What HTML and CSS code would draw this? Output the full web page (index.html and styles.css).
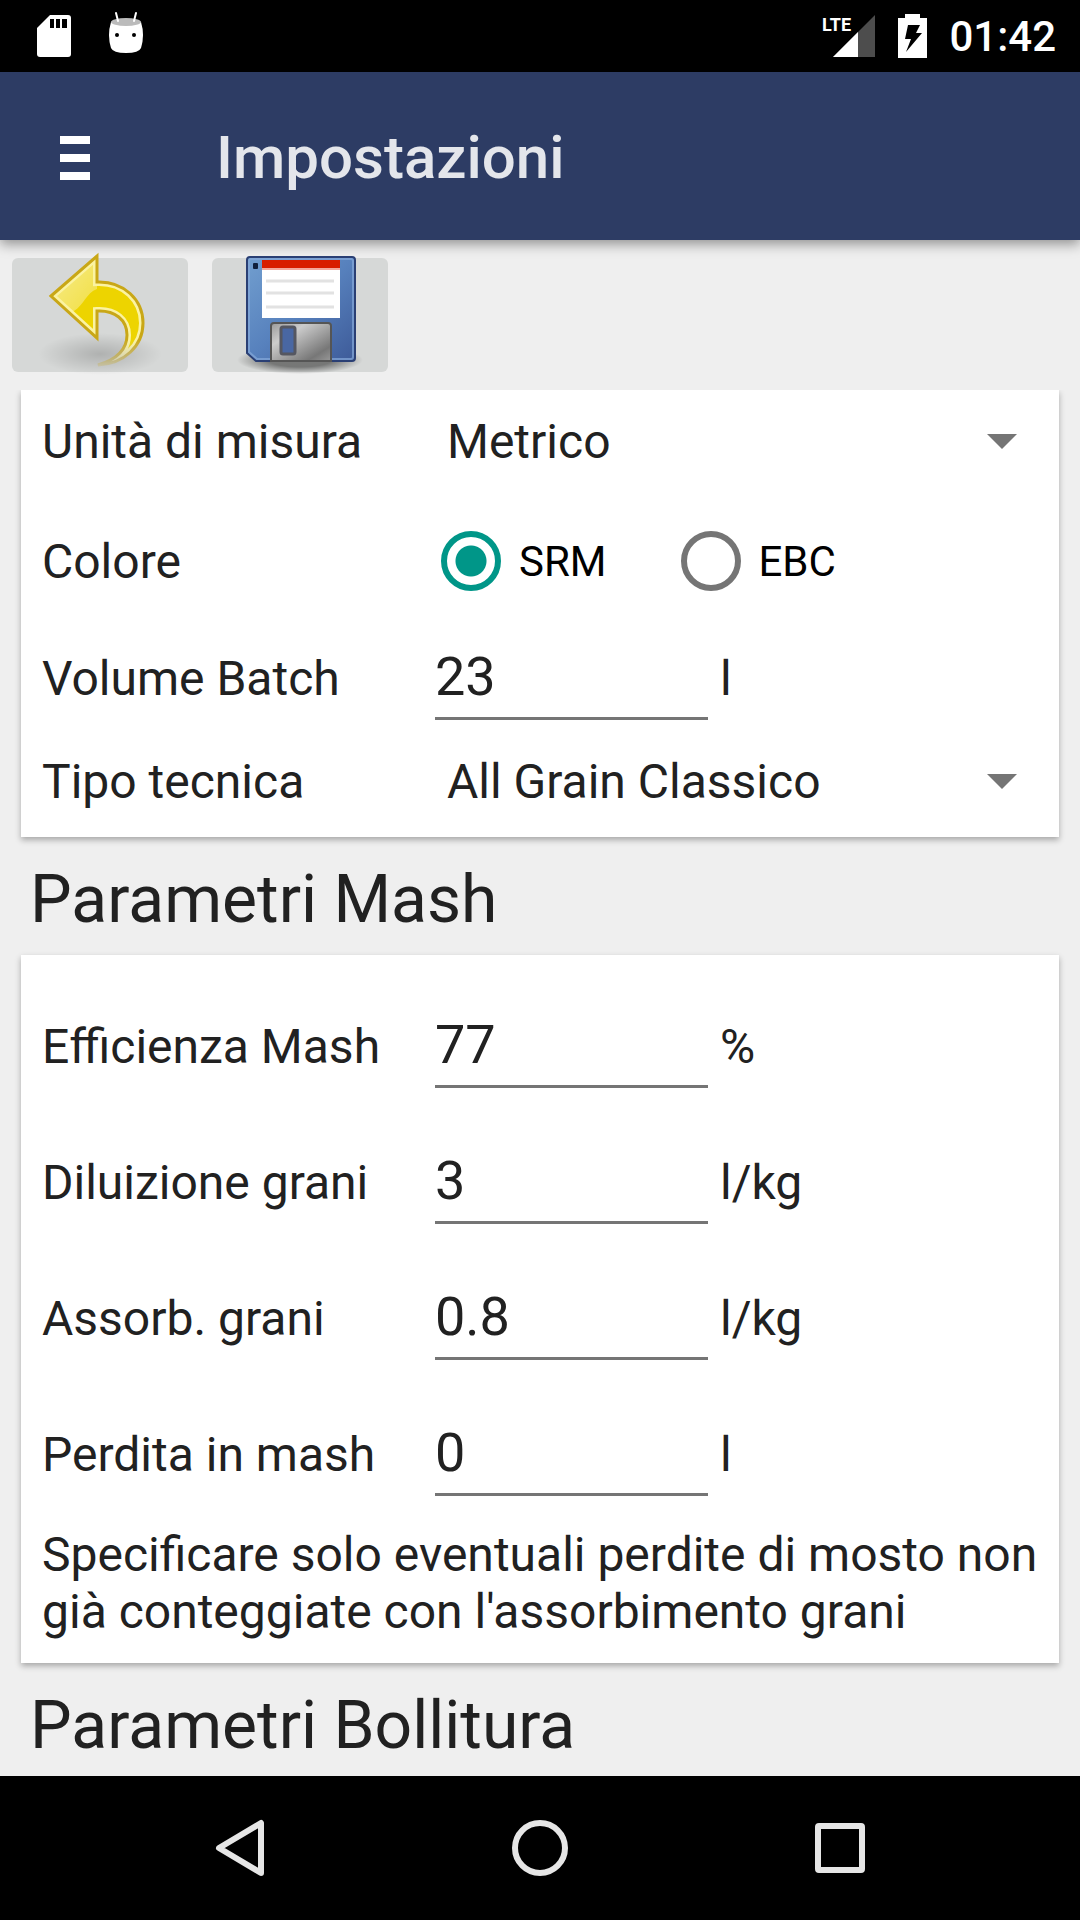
FILE: index.html
```html
<!DOCTYPE html>
<html lang="it">
<head>
    <meta charset="UTF-8">
    <meta name="viewport" content="width=device-width, initial-scale=1.0">
    <title>Impostazioni</title>
    <link rel="stylesheet" href="styles.css">
</head>
<body>

    <!-- status bar -->
    <div class="status-bar">
        <svg width="34" height="42" viewBox="0 0 34 42">
            <path d="M13 0H31Q34 0 34 3V39Q34 42 31 42H3Q0 42 0 39V13Z" fill="#fff"/>
            <path d="M13 4h4v9h-4zM19 4h4v9h-4zM25 4h5v9h-5z" fill="#000"/>
        </svg>
        <svg class="droid" width="34" height="42" viewBox="0 0 34 42">
            <path d="M2 10Q17 4 32 10Q36 23 32 36Q30 41 17 41Q4 41 2 36Q-2 23 2 10Z" fill="#fff"/>
            <ellipse cx="17" cy="10" rx="15" ry="4" fill="#bbb"/>
            <path d="M7 1L9 9M27 1L25 9" stroke="#fff" stroke-width="2" stroke-linecap="round"/>
            <circle cx="8" cy="23" r="2" fill="#000"/>
            <circle cx="25" cy="23" r="2" fill="#000"/>
        </svg>
        <div class="status-right">
            <svg width="54" height="44" viewBox="0 0 54 44">
                <path d="M53 1V43H11Z" fill="#4d4d4d"/>
                <path d="M36 18V43H11Z" fill="#fff"/>
                <text class="lte" x="0" y="17">LTE</text>
            </svg>
            <svg width="29" height="44" viewBox="0 0 29 44">
                <path d="M7 0H22V4H29V44H0V4H7Z" fill="#fff"/>
                <path d="M10 11H22L18 19H24L8 38L13 25H7Z" fill="#000"/>
            </svg>
            <span class="clock">01:42</span>
        </div>
    </div>

    <header class="app-bar">
        <button class="menu-btn" type="button" aria-label="Menu">
            <svg width="30" height="44" viewBox="0 0 30 44">
                <path d="M0 0h30v8H0zM0 18h30v8H0zM0 36h30v8H0z" fill="#fff"/>
            </svg>
        </button>
        <h1>Impostazioni</h1>
    </header>

    <div class="toolbar">
        <button class="tool-btn" type="button" aria-label="Annulla">
            <svg width="128" height="120" viewBox="36 254 128 120">
                <defs>
                    <radialGradient id="undoShadow">
                        <stop offset="0" stop-color="#000" stop-opacity=".18"/>
                        <stop offset="1" stop-color="#000" stop-opacity="0"/>
                    </radialGradient>
                    <linearGradient id="undoFade" x1="0" y1="0" x2="0" y2="1">
                        <stop offset=".75" stop-color="#fff"/>
                        <stop offset="1" stop-color="#fff" stop-opacity=".1"/>
                    </linearGradient>
                    <linearGradient id="undoShine" x1="0" y1="0" x2="1" y2="1">
                        <stop offset="0" stop-color="#fff" stop-opacity=".6"/>
                        <stop offset="1" stop-color="#fff" stop-opacity=".25"/>
                    </linearGradient>
                    <path id="undoShape" d="M51 295L97 255V281C124 280 143 299 143 322C143 345 124 363 98 364C118 358 127 347 127 334C127 319 115 309 97 310V337Z"/>
                    <clipPath id="undoClip"><use href="#undoShape"/></clipPath>
                    <mask id="undoMask" maskUnits="userSpaceOnUse" x="36" y="250" width="128" height="118">
                        <rect x="36" y="250" width="128" height="118" fill="url(#undoFade)"/>
                    </mask>
                </defs>
                <ellipse cx="100" cy="353" rx="62" ry="21" fill="url(#undoShadow)"/>
                <g mask="url(#undoMask)">
                    <use href="#undoShape" fill="#edd400"/>
                    <g clip-path="url(#undoClip)">
                        <path d="M45 295L97 250V288C86 292 84 304 74 310L66 314Z" fill="url(#undoShine)"/>
                        <use href="#undoShape" fill="none" stroke="#fbf3a2" stroke-width="8"/>
                    </g>
                    <use href="#undoShape" fill="none" stroke="#c9a716" stroke-width="3"/>
                </g>
            </svg>
        </button>
        <button class="tool-btn" type="button" aria-label="Salva">
            <svg width="128" height="120" viewBox="236 255 128 120">
                <defs>
                    <linearGradient id="diskBody" x1="0" y1="0" x2="1" y2="1">
                        <stop offset="0" stop-color="#729fcf"/>
                        <stop offset=".5" stop-color="#5781bd"/>
                        <stop offset="1" stop-color="#3d5a98"/>
                    </linearGradient>
                    <linearGradient id="diskMetal" x1="0" y1="0" x2="1" y2="1">
                        <stop offset="0" stop-color="#999"/>
                        <stop offset=".3" stop-color="#ccc"/>
                        <stop offset=".8" stop-color="#777"/>
                        <stop offset="1" stop-color="#999"/>
                    </linearGradient>
                    <radialGradient id="diskShadow">
                        <stop offset=".5" stop-color="#000" stop-opacity=".45"/>
                        <stop offset="1" stop-color="#000" stop-opacity="0"/>
                    </radialGradient>
                </defs>
                <ellipse cx="300" cy="360" rx="63" ry="14" fill="url(#diskShadow)"/>
                <path d="M250 257H352Q355 257 355 260V358Q355 361 352 361H256L247 353V260Q247 257 250 257Z" fill="url(#diskBody)" stroke="#2a3f74" stroke-width="2"/>
                <path d="M251 259H351Q353 259 353 261V357Q353 359 351 359H257L249 352V261Q249 259 251 259Z" fill="none" stroke="#86a9da" stroke-width="2" stroke-opacity=".7"/>
                <rect x="253" y="263" width="5" height="6" rx="1" fill="#10203c"/>
                <rect x="262" y="260" width="78" height="58" fill="#fff"/>
                <rect x="262" y="260" width="78" height="8" fill="#d81e00"/>
                <rect x="262" y="268" width="78" height="2" fill="#f3a99d"/>
                <path d="M266 281H334M266 293H334M266 307H334" stroke="#e2e2e2" stroke-width="3"/>
                <path d="M271 361V326Q271 323 274 323H328Q331 323 331 326V361Z" fill="url(#diskMetal)" stroke="#555" stroke-width="2"/>
                <rect x="281" y="327" width="14" height="27" rx="2" fill="#4967a3" stroke="#555761" stroke-width="3"/>
            </svg>
        </button>
    </div>

    <main class="content">
        <section class="card">
            <div class="row row-first">
                <label for="unita">Unità di misura</label>
                <select id="unita" name="unita">
                    <option selected>Metrico</option>
                    <option>Imperiale</option>
                </select>
            </div>
            <div class="row row-color" role="radiogroup" aria-labelledby="coloreLabel">
                <span id="coloreLabel">Colore</span>
                <div class="radios">
                    <label class="radio"><input type="radio" name="colore" value="srm" checked>SRM</label>
                    <label class="radio"><input type="radio" name="colore" value="ebc">EBC</label>
                </div>
            </div>
            <div class="row row-volume">
                <label for="volume">Volume Batch</label>
                <input type="text" id="volume" name="volume" value="23">
                <span class="unit">l</span>
            </div>
            <div class="row row-last">
                <label for="tecnica">Tipo tecnica</label>
                <select id="tecnica" name="tecnica">
                    <option selected>All Grain Classico</option>
                    <option>Estratto</option>
                </select>
            </div>
        </section>

        <h2>Parametri Mash</h2>

        <section class="card card-mash">
            <div class="row">
                <label for="efficienza">Efficienza Mash</label>
                <input type="text" id="efficienza" name="efficienza" value="77">
                <span class="unit">%</span>
            </div>
            <div class="row">
                <label for="diluizione">Diluizione grani</label>
                <input type="text" id="diluizione" name="diluizione" value="3">
                <span class="unit">l/kg</span>
            </div>
            <div class="row">
                <label for="assorbimento">Assorb. grani</label>
                <input type="text" id="assorbimento" name="assorbimento" value="0.8">
                <span class="unit">l/kg</span>
            </div>
            <div class="row">
                <label for="perdita">Perdita in mash</label>
                <input type="text" id="perdita" name="perdita" value="0">
                <span class="unit">l</span>
            </div>
            <p>Specificare solo eventuali perdite di mosto non già conteggiate con l'assorbimento grani</p>
        </section>

        <h2>Parametri Bollitura</h2>
    </main>

    <!-- navigation buttons -->
    <nav class="nav-bar">
        <button type="button" aria-label="Indietro">
            <svg width="60" height="60" viewBox="0 0 60 60">
                <path d="M51 5V55L9 30Z"/>
            </svg>
        </button>
        <button type="button" aria-label="Home">
            <svg width="60" height="60" viewBox="0 0 60 60">
                <circle cx="30" cy="30" r="25"/>
            </svg>
        </button>
        <button type="button" aria-label="Recenti">
            <svg width="60" height="60" viewBox="0 0 60 60">
                <rect x="8" y="8" width="44" height="44" rx="1"/>
            </svg>
        </button>
    </nav>

</body>
</html>
```
FILE: styles.css
```css
* {
    box-sizing: border-box;
}

body {
    margin: 0;
    height: 100vh;
    display: flex;
    flex-direction: column;
    background-color: #efefef;
    color: #212121;
    font-family: Roboto, sans-serif;
    font-size: 48px;
    line-height: 57px;
}

button {
    border: none;
    padding: 0;
    background: none;
    cursor: pointer;
}

svg {
    display: block;
    flex-shrink: 0;
    overflow: visible;
}

.status-bar {
    flex-shrink: 0;
    height: 72px;
    padding: 0 24px 0 37px;
    display: flex;
    align-items: center;
    gap: 38px;
    background-color: #000;
    color: #fff;
}

.droid {
    margin-bottom: 6px;
}

.status-right {
    margin-left: auto;
    display: flex;
    align-items: center;
    gap: 22px;
}

.lte {
    fill: #fff;
    font-size: 18px;
    font-weight: 700;
}

.clock {
    font-size: 42px;
    font-weight: 500;
}

.app-bar {
    position: relative;
    flex-shrink: 0;
    height: 168px;
    padding: 4px 0 0 60px;
    display: flex;
    align-items: center;
    gap: 126px;
    background-color: #2d3c64;
    box-shadow: 0 4px 12px rgba(0, 0, 0, 0.4);
}

h1 {
    margin: 0;
    color: #e4e6eb;
    font-size: 60px;
    font-weight: 500;
    line-height: 72px;
}

.toolbar {
    flex-shrink: 0;
    padding: 18px 12px;
    display: flex;
    gap: 24px;
}

.tool-btn {
    width: 176px;
    height: 114px;
    display: flex;
    align-items: center;
    justify-content: center;
    border-radius: 6px;
    background-color: #d6d8d7;
    position: relative;
}

.content {
    flex: 1;
    min-height: 0;
    overflow-y: auto;
    scrollbar-width: none;
}

.card {
    margin: 0 21px;
    padding: 0 21px;
    background-color: #fff;
    box-shadow: 0 3px 6px rgba(0, 0, 0, 0.3);
}

.card-mash {
    padding: 23px 21px;
}

.card p {
    margin: 4px 0 0;
}

.row {
    min-height: 136px;
    display: grid;
    grid-template-columns: 393px 273px 1fr;
    align-items: center;
}

.row-first {
    min-height: 102px;
}

.row-color {
    min-height: 138px;
}

.row-volume {
    min-height: 96px;
}

.row-last {
    min-height: 111px;
}

.unit {
    padding-left: 12px;
}

input[type="text"] {
    width: 100%;
    height: 84px;
    padding: 8px 0 9px;
    border: none;
    border-bottom: 3px solid #757575;
    background: none;
    color: #212121;
    font-family: inherit;
    font-size: 54px;
    line-height: 64px;
    outline: none;
}

select {
    grid-column: 2 / 4;
    width: 100%;
    padding: 0 60px 0 12px;
    border: none;
    appearance: none;
    background: url("data:image/svg+xml,%3Csvg xmlns='http://www.w3.org/2000/svg' width='30' height='15'%3E%3Cpath d='M0 0H30L15 15Z' fill='%23757575'/%3E%3C/svg%3E") no-repeat right 21px center;
    color: #212121;
    font-family: inherit;
    font-size: 48px;
    line-height: 57px;
    outline: none;
}

.radios {
    grid-column: 2 / 4;
    padding-left: 6px;
    display: flex;
    gap: 74px;
}

.radio {
    display: flex;
    align-items: center;
    gap: 18px;
    color: #000;
    font-size: 42px;
}

input[type="radio"] {
    width: 60px;
    height: 60px;
    margin: 0;
    appearance: none;
    border: 6px solid #757575;
    border-radius: 50%;
}

input[type="radio"]:checked {
    border-color: #009688;
    background: radial-gradient(circle, #009688 15px, transparent 16px);
}

h2 {
    margin: 0;
    padding: 24px 30px 16px;
    font-size: 66px;
    font-weight: 400;
    line-height: 78px;
}

.nav-bar {
    flex-shrink: 0;
    height: 144px;
    display: flex;
    align-items: center;
    justify-content: center;
    gap: 240px;
    background-color: #000;
}

.nav-bar svg {
    fill: none;
    stroke: #e6e6e6;
    stroke-width: 6;
    stroke-linejoin: round;
}
```
